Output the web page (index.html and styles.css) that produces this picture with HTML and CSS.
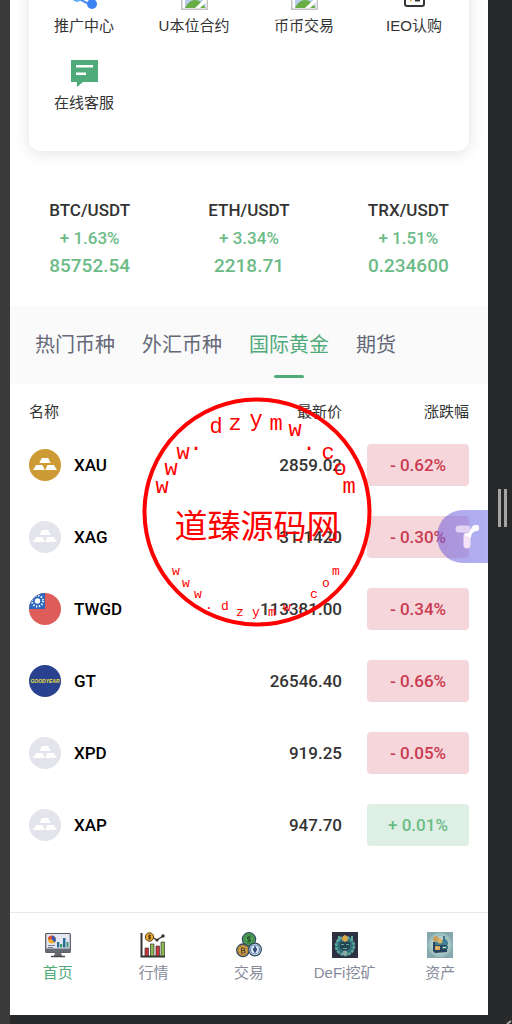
FILE: index.html
```html
<!DOCTYPE html>
<html lang="zh-CN">
<head>
    <meta charset="UTF-8">
    <meta name="viewport" content="width=device-width, initial-scale=1.0">
    <title>首页</title>
    <link rel="stylesheet" href="styles.css">
</head>
<body>
    <!-- Shared icons -->
    <svg class="sprite" aria-hidden="true">
        <symbol id="picture" viewBox="0 0 27 27">
            <path fill="#c4c4c4" d="M0 0h27v27H0z"/>
            <path fill="#fff" d="M1.500 1h24v24.500h-24z"/>
            <path fill="#b9cdf0" d="M4 2h20.500v23H4z"/>
            <path fill="#69ad46" d="M4 25c2-5 6-8 10-8s8 3 10.500 8z"/>
            <path fill="#fff" d="M14 25 25.500 14v5L19 25z"/>
        </symbol>
        <symbol id="bars" viewBox="0 0 32 32">
            <path fill="#fff" d="M12.800 9h6.400l2.500 5H10.300zM7.200 16h6.300l2.300 5H4zM18.500 16h6.300l3.300 5H16.200z"/>
        </symbol>
    </svg>

    <div class="screen">
        <main>
            <!-- Shortcuts -->
            <nav class="shortcuts">
                <a href="#">
                    <svg viewBox="0 0 27 27"><path d="M21 6 6 15l14 7" fill="none" stroke="#4b8df8" stroke-width="2"/><circle cx="21" cy="6" r="5" fill="#4b8df8"/><circle cx="6" cy="14" r="5" fill="#5eb1fa"/><circle cx="21" cy="21" r="5" fill="#3c83f6"/></svg>
                    推广中心
                </a>
                <a href="#">
                    <svg><use href="#picture"/></svg>
                    U本位合约
                </a>
                <a href="#">
                    <svg><use href="#picture"/></svg>
                    币币交易
                </a>
                <a href="#">
                    <svg viewBox="0 0 27 27"><rect x="4" y="3" width="19" height="20" rx="2" fill="#fff" stroke="#333" stroke-width="2"/><path stroke="#333" stroke-width="2" d="M14 17.500h5"/><path fill="#f5a623" d="M9 13h2v4l-1 2-1-2z"/></svg>
                    IEO认购
                </a>
                <a href="#">
                    <svg viewBox="0 0 27 27"><path fill="#50ab7a" d="M0 0h27v22H12l-6 5v-5H0z"/><path fill="#fff" d="M5 5h17v2.500H5zM5 12.500h10V15H5z"/></svg>
                    在线客服
                </a>
            </nav>

            <!-- Main pairs -->
            <section class="quotes">
                <div class="quote">
                    <h2>BTC/USDT</h2>
                    <p>+ 1.63%</p>
                    <strong>85752.54</strong>
                </div>
                <div class="quote">
                    <h2>ETH/USDT</h2>
                    <p>+ 3.34%</p>
                    <strong>2218.71</strong>
                </div>
                <div class="quote">
                    <h2>TRX/USDT</h2>
                    <p>+ 1.51%</p>
                    <strong>0.234600</strong>
                </div>
            </section>

            <div class="tabs">
                <button type="button">热门币种</button>
                <button type="button">外汇币种</button>
                <button type="button" class="active">国际黄金</button>
                <button type="button">期货</button>
            </div>

            <!-- Market list -->
            <div class="market">
                <table>
                    <thead>
                        <tr><th class="name">名称</th><th class="price">最新价</th><th class="change">涨跌幅</th></tr>
                    </thead>
                    <tbody>
                        <tr>
                            <td class="name"><div class="coin"><svg class="gold"><use href="#bars"/></svg>XAU</div></td>
                            <td class="price">2859.02</td>
                            <td class="change"><span class="down">- 0.62%</span></td>
                        </tr>
                        <tr>
                            <td class="name"><div class="coin"><svg><use href="#bars"/></svg>XAG</div></td>
                            <td class="price">31.1420</td>
                            <td class="change"><span class="down">- 0.30%</span></td>
                        </tr>
                        <tr>
                            <td class="name"><div class="coin"><svg class="flag" viewBox="0 0 32 32"><path fill="#2c68bd" d="M0 0h16v16H0z"/><circle cx="8.500" cy="8" r="5.500" fill="none" stroke="#fff" stroke-width="2" stroke-dasharray="1.300 1.580"/><circle cx="8.500" cy="8" r="2.700" fill="#fff"/></svg>TWGD</div></td>
                            <td class="price">113381.00</td>
                            <td class="change"><span class="down">- 0.34%</span></td>
                        </tr>
                        <tr>
                            <td class="name"><div class="coin"><svg class="goodyear" viewBox="0 0 32 32"><text x="16" y="18">GOODYEAR</text></svg>GT</div></td>
                            <td class="price">26546.40</td>
                            <td class="change"><span class="down">- 0.66%</span></td>
                        </tr>
                        <tr>
                            <td class="name"><div class="coin"><svg><use href="#bars"/></svg>XPD</div></td>
                            <td class="price">919.25</td>
                            <td class="change"><span class="down">- 0.05%</span></td>
                        </tr>
                        <tr>
                            <td class="name"><div class="coin"><svg><use href="#bars"/></svg>XAP</div></td>
                            <td class="price">947.70</td>
                            <td class="change"><span class="up">+ 0.01%</span></td>
                        </tr>
                    </tbody>
                </table>
            </div>
        </main>

        <!-- Bottom navigation -->
        <nav class="tabbar">
            <a href="#" class="active">
                <svg viewBox="0 0 26 26"><rect x=".7" y="1.500" width="24.600" height="19" rx="1" fill="#e3e7f3" stroke="#55565f" stroke-width="1.200"/><path fill="#686a73" d="M1 16.500h24v4H1zM10 21h6l1 3H9z"/><path stroke="#45464e" stroke-width="1.500" d="M6 24.500h14"/><circle cx="7" cy="7.500" r="4" fill="#f2b230"/><path fill="#dc4f3c" d="M7 7.500H3a4 4 0 0 1 4-4z"/><path fill="#3558b8" d="M7 7.500v-4a4 4 0 0 1 2.500 7z"/><path fill="#276e91" d="M12 10h2.300v5.500H12zM18 6h2.500v9.500H18z"/><path fill="#43917c" d="M15 12h2.300v3.500H15zM21.500 10h2v5.500h-2z"/><path stroke="#7b8090" d="M3 13.500h7M3 15.500h5"/></svg>
                首页
            </a>
            <a href="#">
                <svg viewBox="0 0 26 26"><path fill="none" stroke="#333" stroke-width="2" d="M1.500 1v23.500H25"/><path fill="#c9343a" stroke="#333" stroke-width=".7" d="M5 16h3.500v8H5zM16 14h3.500v10H16z"/><path fill="#8db851" stroke="#333" stroke-width=".7" d="M10.500 12H14v12h-3.500zM21 10h3.500v14H21z"/><path fill="none" stroke="#333" stroke-width="1.300" d="m12 5 5 3 6-4"/><circle cx="17" cy="8" r="1.600" fill="#333"/><circle cx="23" cy="4" r="1.700" fill="#333"/><circle cx="9.500" cy="5" r="4.200" fill="#e9a92f" stroke="#574020"/><path fill="none" stroke="#574020" d="M11 3.500H8.700v1.600h1.800v1.600H8.200M9.600 2.500v5"/></svg>
                行情
            </a>
            <a href="#">
                <svg viewBox="0 0 26 26"><g stroke="#344d62" stroke-width="1.300"><circle cx="13" cy="7.300" r="6.600" fill="#55a858"/><circle cx="7" cy="18.300" r="6.300" fill="#d8a64a"/><circle cx="19" cy="17.500" r="6.300" fill="#e5edf6"/></g><circle cx="13" cy="7.300" r="4.500" fill="none" stroke="#2c743e" stroke-width=".8"/><circle cx="7" cy="18.300" r="4.700" fill="none" stroke="#94702c" stroke-width=".8"/><circle cx="19" cy="17.500" r="4.500" fill="none" stroke="#5684b5" stroke-width="1.200"/><path fill="none" stroke="#214f32" d="M15 5h-3.500v2.200h3v2.200H11M13 4v6.500"/><path fill="none" stroke="#4d3f29" stroke-width="1.100" d="M5.500 16v5h2c2.300 0 2.300-2.400 0-2.500 1.800 0 1.800-2.500 0-2.500zM5.500 18.500h2"/><path fill="#354f77" d="m19 13.500 2.300 4-2.300 4-2.300-4z"/></svg>
                交易
            </a>
            <a href="#">
                <svg viewBox="0 0 26 26"><path fill="#2c3041" d="M0 0h26v26H0z"/><circle cx="13" cy="14" r="9.500" fill="#2f6f78"/><circle cx="13" cy="14" r="9" fill="none" stroke="#5aa59e" stroke-width="2.500" stroke-dasharray="3 1"/><path fill="#254554" d="M8 10h10v6l-5 4-5-4z"/><path fill="#5da79f" d="M9 12h3v1H9zM14 12h3v1h-3zM11 16h4v1h-4zM6 4h2v5H6zM19 4h2v5h-2z"/><path fill="#e1a744" d="M10 8c0-3 1-4 3-5 2 1 3 2 3 5l-3 2z"/><circle cx="13" cy="21" r="2.500" fill="#91aaa0"/></svg>
                DeFi挖矿
            </a>
            <a href="#">
                <svg viewBox="0 0 26 26"><path fill="#83a9ae" d="M0 0h26v26H0z"/><circle cx="13" cy="13" r="12" fill="#9fc0c0"/><circle cx="13" cy="13" r="9" fill="#b5cfcd"/><path fill="#27435d" d="m6 10 14-1v11L8 21l-2-2z"/><path fill="#418397" d="m8 10 11-3 2 3v3H8z"/><circle cx="9" cy="7" r="3" fill="#c79e62"/><circle cx="13" cy="9" r="2.500" fill="#ddb66b"/><path fill="#d9a95f" d="M8 14h5v4H8z"/><path fill="#36758b" d="M16 4h2v5h-2zM15 14h6v3h-6z"/><path stroke="#e5d8ad" d="M10 15v2M16 15.500h3"/></svg>
                资产
            </a>
        </nav>

        <button type="button" class="float-btn" aria-label="T">
            <svg viewBox="0 0 24 26"><path d="M4 5h8" stroke="#e3d3f2" stroke-width="7" stroke-linecap="round"/><path d="M12 12v9" stroke="#f3e3f4" stroke-width="7" stroke-linecap="round"/><path fill="#fff" d="M9 11c5-1 6-4 8-8 1-2 3-2 4-2a3 3 0 0 1 1 6c-3 0-6 2-6 7z"/></svg>
        </button>
    </div>

    <div class="drag"></div>
    <svg class="corner" viewBox="0 0 6 4"><path d="M1 4 5 1" stroke="#aaa" stroke-width="2"/></svg>

    <!-- Site stamp -->
    <svg class="stamp" viewBox="0 0 230 230">
        <circle cx="115" cy="115" r="112.500"/>
        <g class="arc-top">
            <text x="20" y="96">w</text><text x="29" y="78">w</text><text x="41" y="62">w</text><text x="54" y="53">.</text>
            <text x="74" y="36">d</text><text x="93" y="33">z</text><text x="114" y="29">y</text><text x="134" y="33">m</text><text x="153" y="39">w</text>
            <text x="167" y="53">.</text><text x="186" y="62">c</text><text x="198" y="78">o</text><text x="207" y="96">m</text>
        </g>
        <text class="stamp-name" x="115" y="141">道臻源码网</text>
        <g class="arc-bottom">
            <text x="34" y="178">w</text><text x="44" y="190">w</text><text x="56" y="201">w</text><text x="67" y="212">.</text>
            <text x="83" y="213">d</text><text x="98" y="219">z</text><text x="114" y="219">y</text><text x="130" y="219">m</text><text x="145" y="214">w</text>
            <text x="158" y="212">.</text><text x="172" y="201">c</text><text x="184" y="190">o</text><text x="194" y="178">m</text>
        </g>
    </svg>
</body>
</html>
```
FILE: styles.css
```css
/* Global Styles */
* {
    box-sizing: border-box;
}

body {
    position: relative;
    margin: 0;
    padding: 0 24px 9px 10px;
    min-height: 100vh;
    display: flex;
    background: linear-gradient(to right, #3a3a3a 10px, #28292b 10px);
    color: #333;
    font-family: "Liberation Sans", "Noto Sans CJK SC", sans-serif;
    font-size: 15px;
    line-height: 24px;
}

a {
    color: inherit;
    text-decoration: none;
}

button {
    border: none;
    padding: 0;
    background: none;
    color: inherit;
    font: inherit;
    cursor: pointer;
}

.sprite {
    position: absolute;
    width: 0;
    height: 0;
}

.screen {
    position: relative;
    flex: 1;
    display: flex;
    flex-direction: column;
    overflow: hidden;
    background: #fff;
}

main {
    flex: 1;
}

/* Shortcuts card, scrolled partly under the top edge */
.shortcuts {
    display: grid;
    grid-template-columns: repeat(4, 1fr);
    row-gap: 22px;
    margin: -37px 19px 0;
    padding: 20px 0 36px;
    border-radius: 12px;
    box-shadow: 0 2px 16px rgba(0, 0, 0, 0.12);
}

.shortcuts a {
    display: flex;
    flex-direction: column;
    align-items: center;
    gap: 4px;
}

.shortcuts svg {
    width: 27px;
    height: 27px;
}

/* Quotes */
.quotes {
    display: grid;
    grid-template-columns: repeat(3, 1fr);
    padding: 45px 0 26px;
    text-align: center;
    font-family: Roboto, sans-serif;
    line-height: 28px;
    color: #6cbb87;
}

.quote h2,
.quote p {
    margin: 0;
    font-size: 17px;
    font-weight: 500;
}

.quote h2 {
    color: #333;
}

.quote strong {
    display: block;
    font-size: 19px;
    font-weight: 500;
}

/* Tabs */
.tabs {
    display: flex;
    gap: 27px;
    height: 78px;
    padding: 0 25px;
    background: #fafafa;
    color: #646877;
    font-size: 20px;
}

.tabs button {
    position: relative;
}

.tabs .active {
    color: #50ab7a;
}

.tabs .active::after {
    content: "";
    position: absolute;
    left: 50%;
    bottom: 6px;
    width: 30px;
    height: 3px;
    margin-left: -15px;
    border-radius: 2px;
    background: #50ab7a;
}

/* Market list */
.market {
    padding: 0 19px;
}

table {
    width: 100%;
    border-collapse: collapse;
}

th {
    padding: 16px 0 5px;
    font-weight: 400;
}

td {
    height: 72px;
    padding: 0;
    font-family: Roboto, sans-serif;
    font-size: 17px;
    font-weight: 500;
}

.name {
    text-align: left;
}

.price,
.change {
    text-align: right;
}

td.name {
    color: #000;
}

.change {
    width: 127px;
}

.coin {
    display: flex;
    align-items: center;
    gap: 13px;
}

.coin svg {
    width: 32px;
    height: 32px;
    border-radius: 50%;
    background: #e3e4ec;
}

.coin .gold {
    background: #cd9a36;
}

.coin .flag {
    background: #de5d5a;
}

.coin .goodyear {
    background: #29428f;
}

.goodyear text {
    fill: #f2e33e;
    font-family: "Liberation Sans", sans-serif;
    font-size: 5px;
    font-style: italic;
    font-weight: 700;
    text-anchor: middle;
}

.change span {
    display: block;
    margin-left: 25px;
    border-radius: 4px;
    line-height: 42px;
    text-align: center;
}

.down {
    background: #f5d7db;
    color: #cb3a50;
}

.up {
    background: #def0e5;
    color: #6cbb87;
}

/* Bottom navigation */
.tabbar {
    display: grid;
    grid-template-columns: repeat(5, 1fr);
    padding: 19px 0 30px;
    border-top: 1px solid #e8e8e8;
    color: #868a9b;
}

.tabbar a {
    display: flex;
    flex-direction: column;
    align-items: center;
    gap: 3px;
}

.tabbar .active {
    color: #50ab7a;
}

.tabbar svg {
    width: 26px;
    height: 26px;
}

/* Floating button */
.float-btn {
    position: absolute;
    top: 510px;
    right: 0;
    width: 51px;
    height: 53px;
    padding: 0 0 0 8px;
    border-radius: 26px 0 0 26px;
    background: linear-gradient(to right, rgba(112, 90, 215, 0.55), rgba(112, 112, 235, 0.55));
}

.float-btn svg {
    display: block;
    width: 24px;
    height: 26px;
    margin: 0 auto;
}

/* Resize handles */
.drag {
    position: absolute;
    top: 489px;
    right: 5px;
    width: 9px;
    height: 38px;
    border: solid #a5a5a5;
    border-width: 0 3px;
}

.corner {
    position: absolute;
    right: 0;
    bottom: 0;
    width: 6px;
    height: 4px;
}

/* Site stamp */
.stamp {
    position: absolute;
    top: 397px;
    left: 50%;
    width: 230px;
    height: 230px;
    margin-left: -114px;
    pointer-events: none;
    fill: #f00;
    text-anchor: middle;
}

.stamp circle {
    fill: none;
    stroke: #f00;
    stroke-width: 4px;
}

.arc-top,
.arc-bottom {
    font-family: "Liberation Mono", monospace;
    font-size: 22px;
}

.arc-bottom {
    font-size: 13px;
}

.stamp-name {
    font-family: "Noto Sans CJK SC", sans-serif;
    font-size: 33px;
}
```
